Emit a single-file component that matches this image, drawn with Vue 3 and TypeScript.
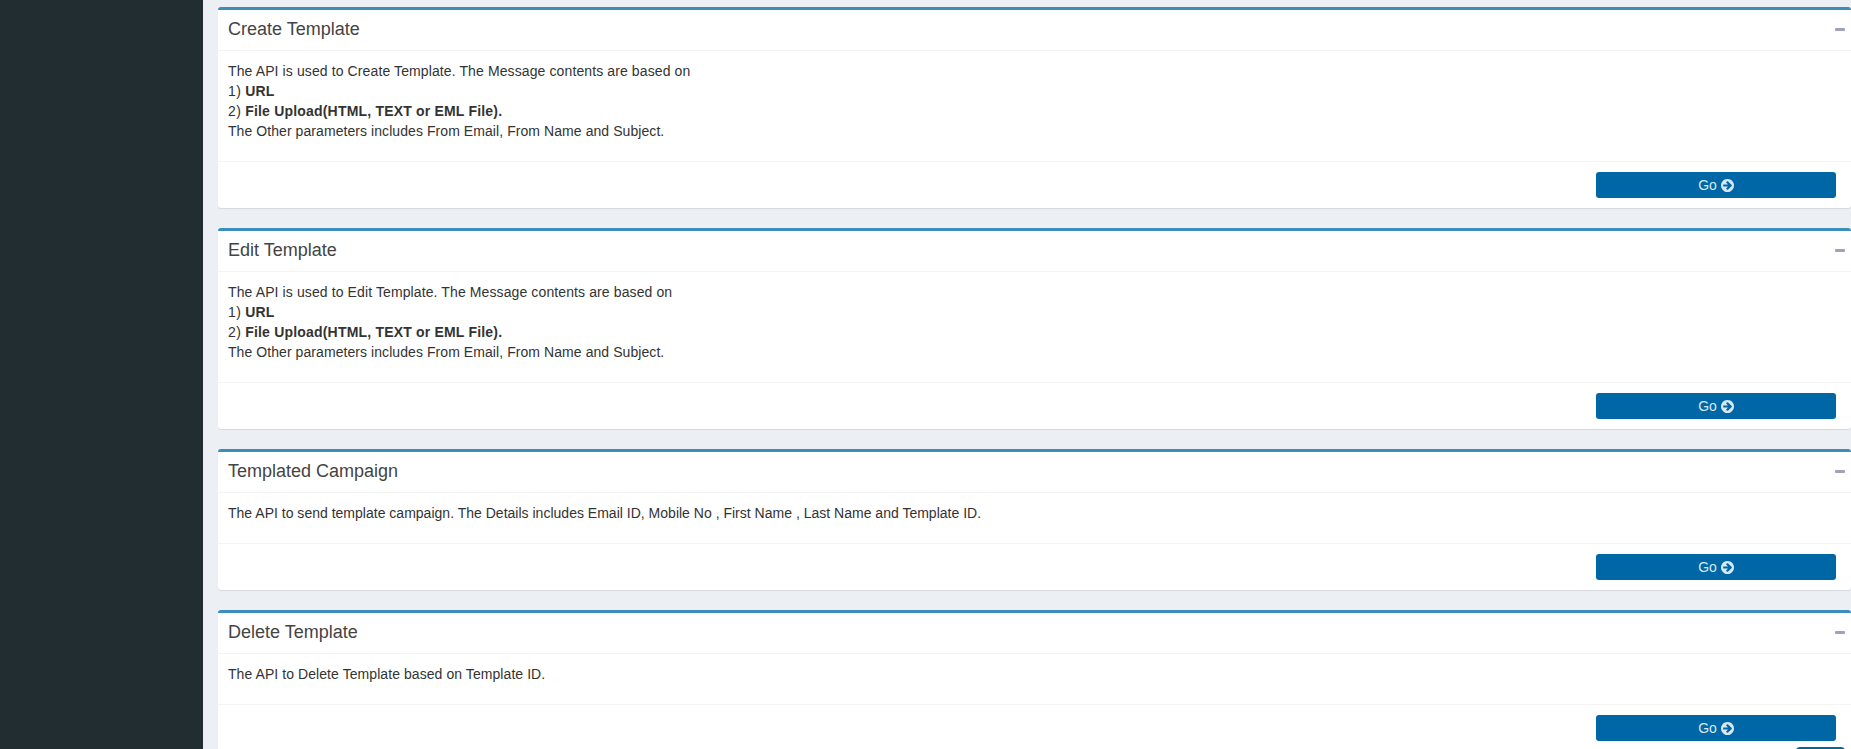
<script setup lang="ts">
interface ApiBox {
  title: string;
  intro: string;
  formats: boolean;
  introClass: string;
}

const otherParams = "The Other parameters includes From Email, From Name and Subject.";

const boxes: ApiBox[] = [
  { title: "Create Template", intro: "The API is used to Create Template. The Message contents are based on", formats: true, introClass: "wide" },
  { title: "Edit Template", intro: "The API is used to Edit Template. The Message contents are based on", formats: true, introClass: "wide" },
  { title: "Templated Campaign", intro: "The API to send template campaign. The Details includes Email ID, Mobile No , First Name , Last Name and Template ID.", formats: false, introClass: "tight" },
  { title: "Delete Template", intro: "The API to Delete Template based on Template ID.", formats: false, introClass: "" },
];
</script>

<template>
  <div class="page">
    <aside class="sidebar"></aside>
    <main class="content">
      <section v-for="box in boxes" :key="box.title" class="box">
        <header class="box-header">
          <h3 class="box-title">{{ box.title }}</h3>
          <span class="minus" aria-label="Collapse"></span>
        </header>
        <div class="box-body">
          <p>
            <span :class="box.introClass">{{ box.intro }}</span>
            <template v-if="box.formats">
              <br /><span class="num">1)</span> <b>URL</b>
              <br /><span class="num">2)</span> <b>File Upload(HTML, TEXT or EML File).</b>
              <br />{{ otherParams }}
            </template>
          </p>
        </div>
        <footer class="box-footer">
          <button class="go" type="button">
            Go
            <svg class="arrow" viewBox="128 128 1536 1536" aria-hidden="true">
              <path d="M1413 896q0-27-18-45l-91-91-362-362q-18-18-45-18t-45 18l-91 91q-18 18-18 45t18 45l189 189h-502q-26 0-45 19t-19 45v128q0 26 19 45t45 19h502l-189 189q-19 19-19 45t19 45l91 91q18 18 45 18t45-18l362-362 91-91q18-18 18-45zm251 0q0 209-103 385.5t-279.5 279.5-385.5 103-385.5-103-279.5-279.5-103-385.5 103-385.5 279.5-279.5 385.5-103 385.5 103 279.5 279.5 103 385.5z" />
            </svg>
          </button>
        </footer>
      </section>
    </main>
    <div class="floating-tab"></div>
  </div>
</template>

<style>
html,
body {
  margin: 0;
  overflow: hidden;
}
</style>

<style scoped>
.page {
  position: relative;
  display: flex;
  height: 749px;
  overflow: hidden;
  background: #ecf0f5;
  font-family: "Liberation Sans", Arial, sans-serif;
  font-size: 14px;
  line-height: 20px;
  color: #333;
}
.sidebar {
  flex: 0 0 203px;
  background: #222d32;
}
.content {
  flex: 1;
  min-width: 0;
  padding: 7px 0 0 15px;
}
.box {
  margin-bottom: 20px;
  background: #fff;
  border-top: 3px solid #3c8dbc;
  border-radius: 3px;
  box-shadow: 0 1px 1px rgba(0, 0, 0, 0.1);
}
.box-header {
  display: flex;
  align-items: center;
  justify-content: space-between;
  height: 38px;
  padding: 0 6px 2px 10px;
  border-bottom: 1px solid #f4f4f4;
}
.box-title {
  margin: 0;
  font-size: 18px;
  font-weight: 500;
  line-height: 18px;
  color: #444;
}
.minus {
  width: 10px;
  height: 3px;
  margin-top: 1px;
  border-radius: 1px;
  background: #9ea3b8;
}
.box-body {
  padding: 10px;
}
.box-body p {
  margin: 0 0 10px;
  letter-spacing: 0.07px;
}
.box-body .wide {
  letter-spacing: 0.11px;
}
.box-body .tight {
  letter-spacing: 0.01px;
}
.box-body .num {
  letter-spacing: 0.4px;
}
.box-body b {
  letter-spacing: 0.19px;
}
.box-footer {
  display: flex;
  justify-content: flex-end;
  padding: 10px 15px 10px 10px;
  border-top: 1px solid #f4f4f4;
}
.go {
  display: flex;
  align-items: center;
  justify-content: center;
  gap: 4px;
  width: 240px;
  height: 26px;
  padding: 0;
  border: 0;
  border-radius: 3px;
  background: #0067a6;
  font: inherit;
  font-size: 14px;
  color: #d8e8f3;
}
.arrow {
  width: 13px;
  height: 13px;
  fill: #d8e8f3;
  fill-rule: evenodd;
}
.floating-tab {
  position: absolute;
  left: 1796px;
  top: 747px;
  width: 49px;
  height: 10px;
  border-radius: 4px 4px 0 0;
  background: #0067a6;
}
</style>
